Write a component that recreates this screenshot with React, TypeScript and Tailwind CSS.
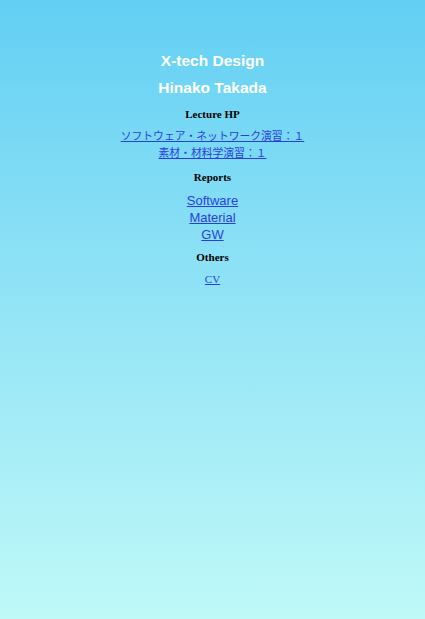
const jaLinks = ["ソフトウェア・ネットワーク演習：１", "素材・材料学演習：１"];
const reports = ["Software", "Material", "GW"];

const serif = "font-['Liberation_Serif','Noto_Sans_CJK_JP',serif]";
const sans = "font-['Liberation_Sans',Arial,sans-serif]";

export default function App() {
  return (
    <div className="min-h-screen bg-gradient-to-b from-[#62cff3] to-[#bff9f8] pt-[51px] text-center">
      <h1 className={`${sans} text-[15.5px] font-bold leading-[20px] text-white`}>
        X-tech Design
      </h1>
      <h1 className={`${sans} mt-[7px] text-[15.5px] font-bold leading-[20px] text-white`}>
        Hinako Takada
      </h1>

      <h2 className={`${serif} mt-[9px] text-[11px] font-bold leading-[14px] text-black`}>
        Lecture HP
      </h2>
      <div className="mt-[7px] flex flex-col items-center">
        {jaLinks.map((l) => (
          <a
            key={l}
            href="#"
            className={`${serif} text-[10.8px] leading-[17px] text-[#2a3fe0] underline`}
          >
            {l}
          </a>
        ))}
      </div>

      <h2 className={`${serif} mt-[8px] text-[11px] font-bold leading-[14px] text-black`}>
        Reports
      </h2>
      <div className="mt-[8px] flex flex-col items-center">
        {reports.map((r) => (
          <a
            key={r}
            href="#"
            className={`${sans} text-[13px] leading-[17px] text-[#2a3fe0] underline`}
          >
            {r}
          </a>
        ))}
      </div>

      <h2 className={`${serif} mt-[7px] text-[11px] font-bold leading-[14px] text-black`}>
        Others
      </h2>
      <div className="mt-[7px] flex flex-col items-center">
        <a href="#" className={`${serif} text-[11px] leading-[17px] text-[#2a3fe0] underline`}>
          CV
        </a>
      </div>
    </div>
  );
}
